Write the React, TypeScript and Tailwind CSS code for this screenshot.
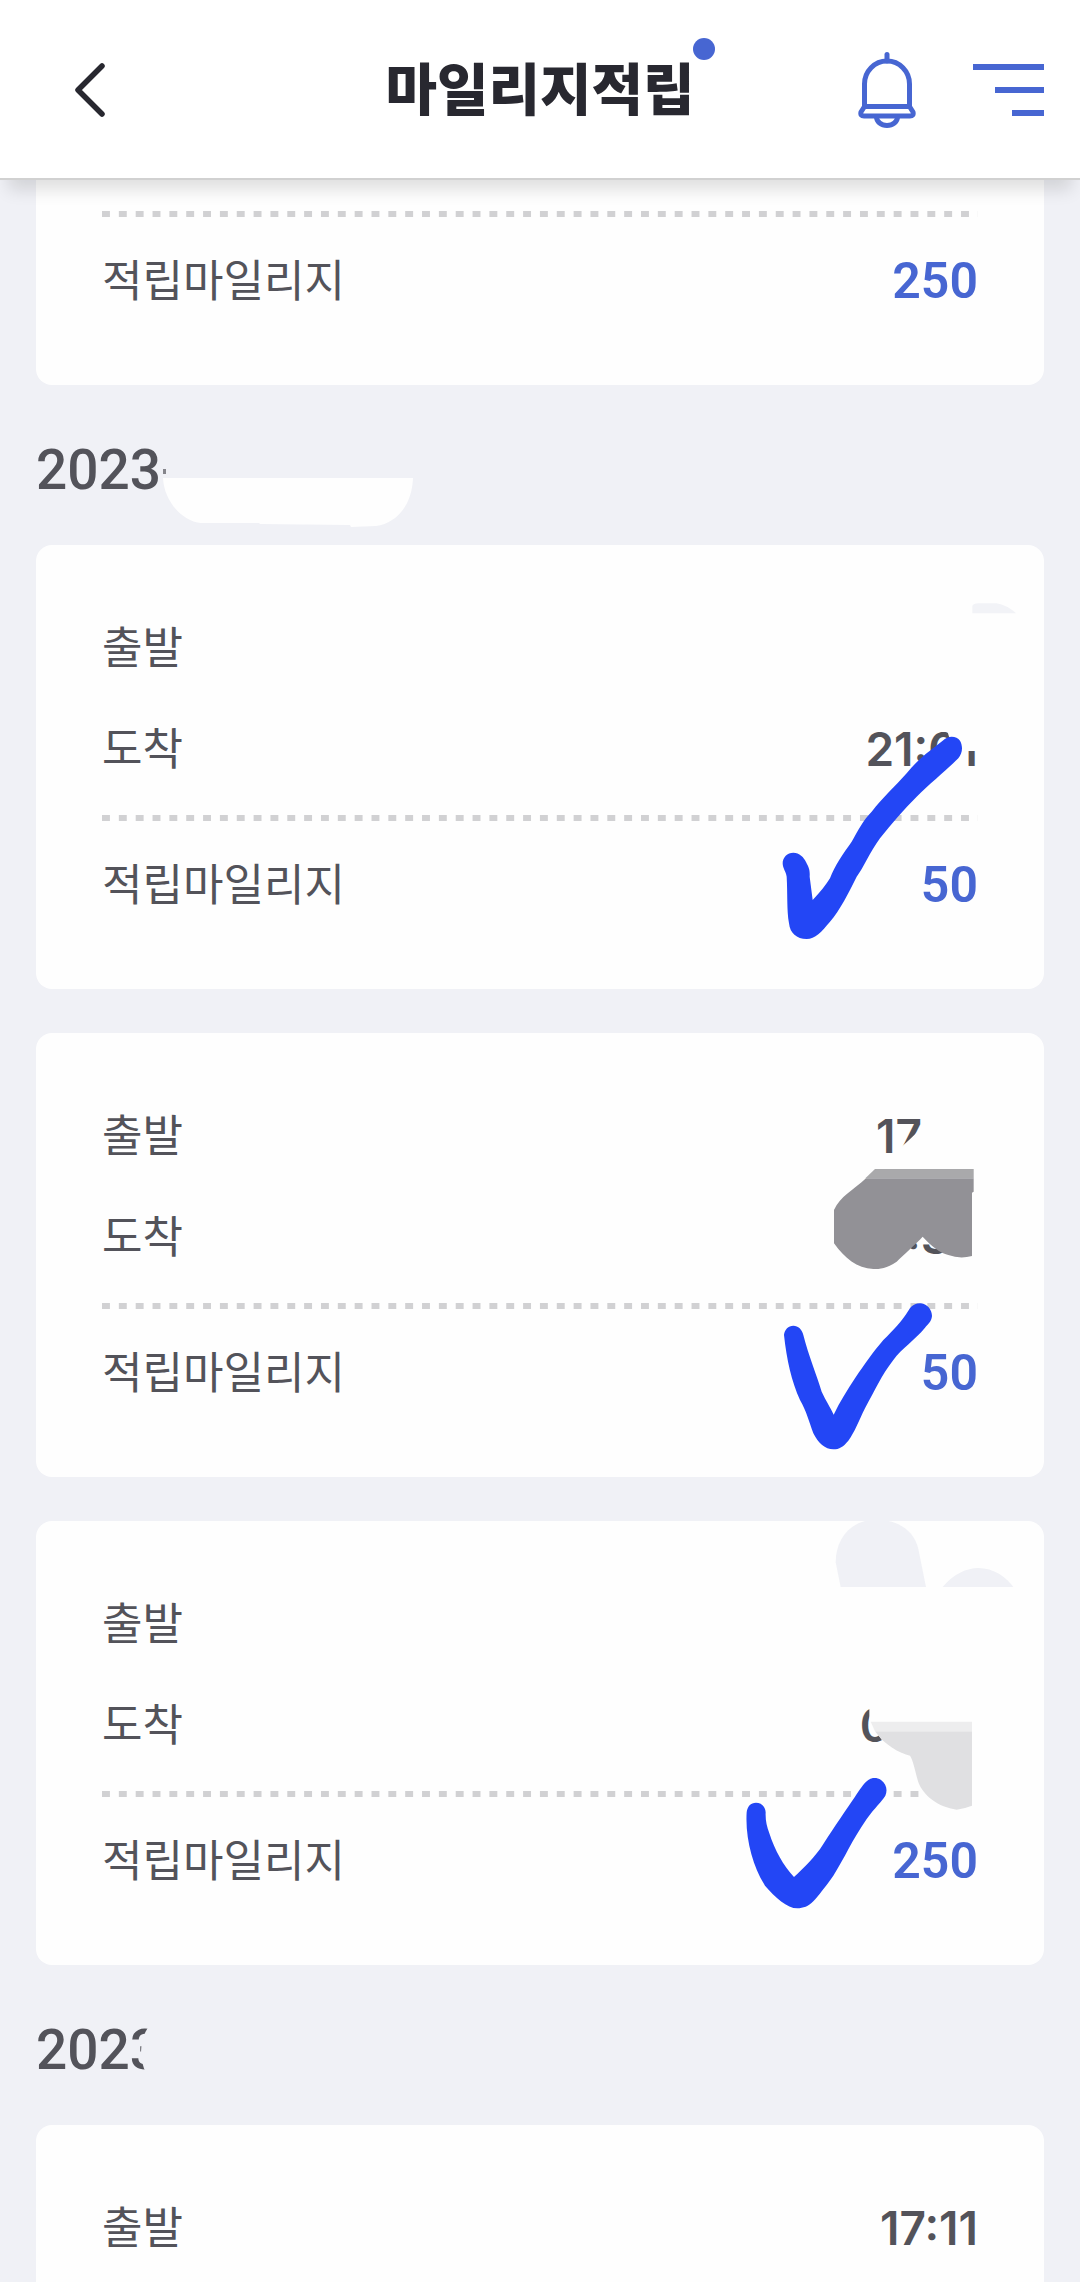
import type { ReactNode } from "react";

type TripCardProps = {
  departure?: ReactNode;
  arrival?: ReactNode;
  mileage: string;
  children?: ReactNode;
};

export default function App() {
  return (
    <div className="flex min-h-screen flex-col bg-[#f0f1f6] font-['Inter','Noto_Sans_CJK_KR',sans-serif] text-[#53535a]">
      <Header />

      <main className="flex flex-1 flex-col px-9">
        <section className="rounded-b-2xl bg-[#fefefe] px-[66px] pt-[31px] pb-[74px]">
          <Divider />
          <MileageRow value="250" />
        </section>

        <DateHeading label="2023">
          <path
            d="M127 93 H377 C376 120 361 138 340 141 L315 142 L314 140 L224 139 L223 138 H165 C145 136 128 115 127 93Z"
            fill="#fefefe"
          />
          <rect x="127" y="84" width="3" height="5" fill="#85858b" />
        </DateHeading>

        <div className="flex flex-col gap-11">
          <TripCard arrival="21:01" mileage="50">
            <Marker viewBox="-228 15 1140 1332">
              <path d="M697 220 V198 Q700 190 715 190 H770 Q800 195 828 220Z" fill="#f2f3f7" />
              <path d="M618 560 H725 V633 H640Z" fill="#fefefe" />
              <path
                d="M128 970 C128 952 142 938 160 938 C178 938 192 952 198 966 C208 985 210 992 209 1010 L218 1080 C240 1057 258 1035 270 1015 C285 975 310 940 335 905 C355 870 370 840 395 815 C430 770 465 740 500 700 C540 650 580 625 608 602 C625 585 650 588 660 602 C670 620 667 640 655 655 C620 690 570 730 530 770 C490 810 455 850 420 895 C390 935 370 985 350 1010 C325 1060 300 1110 270 1145 C245 1175 225 1197 200 1197 C170 1197 150 1180 147 1150 C140 1110 143 1060 140 1010 C138 995 128 985 128 970Z"
                fill="#2346f5"
              />
            </Marker>
          </TripCard>

          <TripCard
            departure={<span className="pr-14">17</span>}
            arrival={<span className="pr-7">:3</span>}
            mileage="50"
          >
            <Marker viewBox="-228 39 1140 1332">
              <path d="M552 315 C530 340 505 362 483 382 L462 410 H560Z" fill="#fefefe" />
              <path
                d="M378 475 H701 V515 L696 518 V708 Q660 718 625 705 C600 698 575 680 548 650 C530 670 490 705 470 725 C440 745 420 747 400 747 C350 745 315 715 282 670 V570 C300 530 340 510 378 475Z"
                fill="#929196"
              />
              <path d="M405 447 H701 V475 H376Z" fill="#a9a9ab" />
              <path
                d="M132 945 C134 928 145 917 160 917 C175 917 186 928 190 945 C205 1005 232 1070 245 1115 C258 1143 270 1160 281 1184 C300 1145 322 1110 345 1075 C375 1030 400 995 430 960 C460 930 485 905 505 872 C515 855 528 850 543 850 C562 852 576 870 576 888 C574 905 565 912 555 923 C525 960 485 985 460 1020 C425 1065 405 1110 375 1165 C355 1205 345 1235 325 1262 C310 1280 298 1288 280 1288 C255 1288 235 1270 220 1240 C207 1205 200 1175 180 1140 C155 1085 140 1020 132 945Z"
                fill="#2346f5"
              />
            </Marker>
          </TripCard>

          <TripCard arrival={<span className="pr-[88px]">0</span>} mileage="250">
            <Marker viewBox="-108 66 1140 1332">
              <path
                d="M495 66 H565 C610 75 645 105 655 150 L678 264 H422 L407 190 C407 130 440 80 495 66Z"
                fill="#f0f1f6"
              />
              <path d="M728 264 C760 225 800 207 835 207 C880 207 920 235 940 264Z" fill="#f0f1f6" />
              <path d="M508 615 H590 V745 H560 L538 712 C520 690 508 675 508 655Z" fill="#fefefe" />
              <path d="M662 865 H835 V905 H662Z" fill="#fefefe" />
              <path
                d="M525 697 H816 V920 Q790 930 770 932 C715 925 670 890 655 850 C645 815 640 785 630 770 C600 765 550 735 525 697Z"
                fill="#e0e0e2"
              />
              <path d="M512 668 H816 V697 H525Z" fill="#ededee" />
              <path
                d="M140 940 C142 922 152 911 168 911 C184 911 196 922 197 940 C196 965 200 980 208 1003 C225 1055 250 1100 282 1134 C310 1108 345 1075 370 1035 C405 980 440 930 465 893 C480 870 490 855 502 845 C515 835 530 835 543 843 C560 855 563 875 556 890 C545 908 525 925 500 960 C455 1025 435 1075 400 1130 C375 1165 355 1190 340 1207 C325 1222 310 1228 292 1228 C262 1228 225 1195 195 1160 C160 1105 135 1020 140 940Z"
                fill="#2346f5"
              />
            </Marker>
          </TripCard>
        </div>

        <DateHeading label="2023">
          <path d="M114 60 C104 72 102 92 110 108 H140 V60Z" fill="#f0f1f6" />
        </DateHeading>

        <section className="flex-1 rounded-t-2xl bg-[#fefefe] px-[66px] pt-[73px]">
          <Row label="출발" value="17:11" />
        </section>
      </main>
    </div>
  );
}

function Header() {
  return (
    <header className="relative z-10 grid h-[180px] grid-cols-[1fr_auto_1fr] items-center border-b-2 border-[#d1d1d1] bg-white px-9 pt-0.5 shadow-[0_18px_16px_-8px_rgba(0,0,0,0.12)]">
      <button type="button" aria-label="뒤로" className="justify-self-start pl-[39px]">
        <svg width="30" height="54" viewBox="0 0 30 54" fill="none">
          <path
            d="M27 3 L3 27 L27 51"
            stroke="#282830"
            strokeWidth="5.5"
            strokeLinecap="round"
            strokeLinejoin="round"
          />
        </svg>
      </button>

      <h1 className="relative text-[56px] leading-[60px] font-black text-[#282830]">
        마일리지적립
        <span className="absolute -top-[22px] -right-5 size-[22px] rounded-full bg-[#4766d2]" />
      </h1>

      <div className="flex items-center gap-[57px] justify-self-end">
        <button type="button" aria-label="알림">
          <svg width="58" height="76" viewBox="0 0 58 76" fill="none" stroke="#4766d2" strokeWidth="5">
            <path d="M29 2.5 V9" strokeLinecap="round" />
            <path d="M6.5 54.5 V32 a22.5 23 0 0 1 45 0 V54.5Z" />
            <path d="M6.5 54.5 L3 60 Q2 64 6 64 H52 Q56 64 55 60 L51.5 54.5" strokeLinejoin="round" />
            <path d="M18.5 65 a10.5 8.5 0 0 0 21 0" />
          </svg>
        </button>
        <button type="button" aria-label="메뉴" className="flex w-[71px] flex-col items-end gap-[17px]">
          <span className="h-1.5 w-full bg-[#4766d2]" />
          <span className="h-1.5 w-[49px] bg-[#4766d2]" />
          <span className="h-1.5 w-8 bg-[#4766d2]" />
        </button>
      </div>
    </header>
  );
}

function DateHeading({ label, children }: { label: string; children?: ReactNode }) {
  return (
    <div className="relative h-40 pt-[55px]">
      <h2 className="font-['Roboto',sans-serif] text-[55px] leading-[60px] font-medium">{label}</h2>
      <svg className="absolute top-0 left-0" width="400" height="160" viewBox="0 0 400 160">
        {children}
      </svg>
    </div>
  );
}

function TripCard({ departure, arrival, mileage, children }: TripCardProps) {
  return (
    <section className="relative rounded-2xl bg-[#fefefe] px-[66px] pt-[73px] pb-[74px]">
      <div className="mb-9 flex flex-col gap-[41px]">
        <Row label="출발" value={departure} />
        <Row label="도착" value={arrival} />
      </div>
      <Divider />
      <MileageRow value={mileage} />
      {children}
    </section>
  );
}

function Row({ label, value }: { label: string; value?: ReactNode }) {
  return (
    <div className="flex h-15 items-center justify-between leading-[60px]">
      <span className="text-[44px]">{label}</span>
      <span className="text-[46px] font-semibold">{value}</span>
    </div>
  );
}

function MileageRow({ value }: { value: string }) {
  return (
    <div className="mt-[34px] flex h-15 items-center justify-between leading-[60px]">
      <span className="text-[44px]">적립마일리지</span>
      <span className="font-['Roboto',sans-serif] text-[50px] font-semibold text-[#4766d2]">{value}</span>
    </div>
  );
}

function Divider() {
  return (
    <div className="h-1.5 bg-[linear-gradient(90deg,#d1d1d3_50%,transparent_50%)] bg-[length:calc(100%/52)_100%]" />
  );
}

// Pen strokes and cover-ups drawn over the right side of a card
function Marker({ viewBox, children }: { viewBox: string; children: ReactNode }) {
  return (
    <svg className="pointer-events-none absolute top-0 right-0" width="380" height="444" viewBox={viewBox}>
      {children}
    </svg>
  );
}
